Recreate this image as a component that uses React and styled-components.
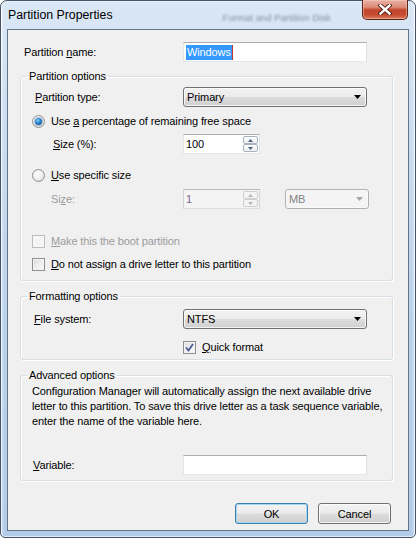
import React from "react";
import styled, { createGlobalStyle } from "styled-components";

const GlobalStyle = createGlobalStyle`
  html, body { margin: 0; padding: 0; background: #ffffff; }
  body { font-family: "Liberation Sans", Arial, sans-serif; }
  *, *::before, *::after { box-sizing: border-box; }
`;

/* ---------- window frame ---------- */

const Window = styled.div`
  width: 416px;
  height: 538px;
  display: flex;
  flex-direction: column;
  padding: 0 6px 6px;
  border: 1px solid #46546a;
  border-radius: 7px 7px 5px 5px;
  background:
    linear-gradient(90deg, rgba(255,255,255,0.55) 0, rgba(255,255,255,0) 3px, rgba(255,255,255,0) calc(100% - 3px), rgba(255,255,255,0.5) 100%),
    linear-gradient(180deg, #dae7f5 0%, #c8dbef 28%, #bbd2eb 60%, #b3cce8 100%);
  box-shadow: inset 0 0 0 1px rgba(255,255,255,0.55);
`;

const TitleBar = styled.div`
  height: 28px;
  display: flex;
  align-items: flex-start;
`;

const Title = styled.div`
  margin: 7px 0 0 1px;
  font-size: 12.3px;
  line-height: 14px;
  color: #000;
  white-space: nowrap;
`;

const GhostTitle = styled.div`
  margin: 11px 0 0 110px;
  font-size: 9.6px;
  line-height: 12px;
  color: rgba(45, 55, 75, 0.5);
  filter: blur(0.9px);
  white-space: nowrap;
`;

const CloseButton = styled.div`
  margin: -1px 1px 0 auto;
  width: 46px;
  height: 20px;
  display: flex;
  align-items: center;
  justify-content: center;
  border: 1px solid #5e2318;
  border-top: none;
  border-radius: 0 0 5px 5px;
  background: linear-gradient(180deg, #e9b0a3 0%, #dc8b78 38%, #c4452d 52%, #c54c33 78%, #dc7d5f 100%);
  box-shadow: inset 0 0 0 1px rgba(255, 215, 200, 0.45);
`;

const Client = styled.div`
  flex: 1;
  display: flex;
  flex-direction: column;
  padding-top: 12px;
  background: #f0f0f0;
  border: 1px solid #637589;
  font-size: 11px;
  letter-spacing: -0.12px;
  color: #000;
`;

/* ---------- rows and labels ---------- */

const Row = styled.div`
  display: flex;
  align-items: center;
  height: ${(p) => p.$h || 20}px;
  margin-top: ${(p) => p.$top || 0}px;
  padding-left: ${(p) => p.$pad || 0}px;
  white-space: nowrap;
`;

const Label = styled.div`
  width: ${(p) => p.$w || 162}px;
  padding-left: ${(p) => p.$pad || 0}px;
  flex: none;
  color: ${(p) => (p.$disabled ? "#9c9c9c" : "#000")};
`;

const Key = styled.span`
  text-decoration: underline;
  text-underline-offset: 1px;
`;

const Choice = styled.span`
  margin-left: 6px;
  color: ${(p) => (p.$disabled ? "#9c9c9c" : "#000")};
`;

/* ---------- group boxes ---------- */

const Group = styled.fieldset`
  margin: ${(p) => p.$top}px 15px 0 12px;
  padding: 0 0 ${(p) => p.$bottom}px 0;
  min-inline-size: 0;
  border: 1px solid #d5dfe5;
  border-radius: 3px;
  box-shadow: inset 1px 1px 0 #ffffff, 1px 1px 0 #ffffff;
`;

const Legend = styled.legend`
  margin-left: 6px;
  padding: 0 2px;
  font-size: 11px;
  line-height: 14px;
  color: #000;
`;

const Paragraph = styled.p`
  margin: 2px 0 0;
  padding-left: 11px;
  line-height: 15px;
  white-space: nowrap;
`;

/* ---------- controls ---------- */

const TextBox = styled.div`
  width: ${(p) => p.$w || 184}px;
  height: 20px;
  flex: none;
  display: flex;
  align-items: center;
  padding: 0 2px;
  background: #ffffff;
  border: 1px solid;
  border-color: #abadb3 #dbdfe6 #e3e9ef #e2e3ea;
`;

const Selected = styled.span`
  background: #3399ff;
  color: #ffffff;
  line-height: 15px;
  padding: 0 1px 0 1px;
  border-right: 1px solid #c8382a;
`;

const Combo = styled.div`
  width: ${(p) => p.$w || 184}px;
  height: 20px;
  flex: none;
  display: flex;
  align-items: center;
  justify-content: space-between;
  margin-left: ${(p) => p.$gap || 0}px;
  padding: 0 5px 0 3px;
  border: 1px solid ${(p) => (p.$disabled ? "#adb2b5" : "#707070")};
  border-radius: 3px;
  color: ${(p) => (p.$disabled ? "#838383" : "#000")};
  background: ${(p) =>
    p.$disabled
      ? "#f4f4f4"
      : "linear-gradient(180deg, #f2f2f2 0%, #ebebeb 48%, #dddddd 52%, #cfcfcf 100%)"};
  box-shadow: inset 0 0 0 1px ${(p) => (p.$disabled ? "#f9f9f9" : "rgba(255,255,255,0.75)")};
`;

const SpinBox = styled.div`
  width: 77px;
  height: 20px;
  flex: none;
  display: flex;
  padding: 0 1px 0 0;
  border: 1px solid;
  border-color: ${(p) => (p.$disabled ? "#b9b9b9 #d4d4d4 #dcdcdc #d4d4d4" : "#abadb3 #dbdfe6 #e3e9ef #e2e3ea")};
  background: ${(p) => (p.$disabled ? "#f4f4f4" : "#ffffff")};
`;

const SpinValue = styled.span`
  flex: 1;
  padding-left: 2px;
  line-height: 18px;
  color: ${(p) => (p.$disabled ? "#7b678e" : "#000")};
`;

const SpinButtons = styled.div`
  width: 15px;
  display: flex;
  flex-direction: column;
  padding: 1px 0;
`;

const SpinButton = styled.div`
  flex: 1;
  display: flex;
  align-items: center;
  justify-content: center;
  border: 1px solid ${(p) => (p.$disabled ? "#cfcfcf" : "#a9b3bf")};
  border-radius: 2px;
  background: ${(p) =>
    p.$disabled ? "#f4f4f4" : "linear-gradient(180deg, #fdfdfd 0%, #ececec 100%)"};
`;

const Radio = styled.span`
  width: 13px;
  height: 13px;
  flex: none;
  border-radius: 50%;
  border: 1px solid #8e8f8f;
  display: flex;
  align-items: center;
  justify-content: center;
  background: radial-gradient(circle at 40% 35%, #ffffff 0%, #f1f1f1 45%, #d5d5d5 100%);
  &::after {
    content: "";
    width: 7px;
    height: 7px;
    border-radius: 50%;
    display: ${(p) => (p.$checked ? "block" : "none")};
    background: radial-gradient(circle at 40% 35%, #8fd4fb 0%, #2b86d2 40%, #0d3d73 100%);
    box-shadow: 0 0 0 1px rgba(35, 90, 150, 0.35);
  }
`;

const Check = styled.span`
  width: 13px;
  height: 13px;
  flex: none;
  display: flex;
  align-items: center;
  justify-content: center;
  border: 1px solid ${(p) => (p.$disabled ? "#bcbcbc" : "#8e8f8f")};
  background: ${(p) =>
    p.$disabled
      ? "#f4f4f4"
      : "linear-gradient(135deg, #d9d9d9 0%, #ededed 50%, #fbfbfb 100%)"};
  box-shadow: inset 0 0 0 1px ${(p) => (p.$disabled ? "#f7f7f7" : "#f4f4f4")};
`;

const ButtonBar = styled.div`
  display: flex;
  justify-content: flex-end;
  gap: 10px;
  margin-top: 22px;
  padding-right: 17px;
`;

const Button = styled.div`
  width: 73px;
  height: 21px;
  display: flex;
  align-items: center;
  justify-content: center;
  border: 1px solid ${(p) => (p.$default ? "#3c7fb1" : "#707070")};
  border-radius: 3px;
  background: linear-gradient(180deg, #f2f2f2 0%, #ebebeb 48%, #dddddd 52%, #cfcfcf 100%);
  box-shadow: inset 0 0 0 1px ${(p) => (p.$default ? "#a6d6f2" : "rgba(255,255,255,0.8)")};
  color: #000;
`;

/* ---------- small drawings ---------- */

const DropArrow = ({ color = "#000" }) => (
  <svg width="7" height="4" viewBox="0 0 7 4">
    <polygon points="0,0 7,0 3.5,4" fill={color} />
  </svg>
);

const SpinArrow = ({ up, color }) => (
  <svg width="5" height="3" viewBox="0 0 5 3">
    <polygon points={up ? "0,3 5,3 2.5,0" : "0,0 5,0 2.5,3"} fill={color} />
  </svg>
);

const CloseGlyph = () => (
  <svg width="14" height="11" viewBox="0 0 14 11">
    <path d="M2.5 1.5 L11.5 9.5 M11.5 1.5 L2.5 9.5" stroke="#4a1710" strokeWidth="4.2" strokeLinecap="square" />
    <path d="M2.5 1.5 L11.5 9.5 M11.5 1.5 L2.5 9.5" stroke="#ffffff" strokeWidth="2.4" strokeLinecap="square" />
  </svg>
);

const CheckMark = () => (
  <svg width="9" height="9" viewBox="0 0 9 9">
    <path d="M1 4.5 L3.5 7.5 L8 1" fill="none" stroke="#4a5d99" strokeWidth="1.8" />
  </svg>
);

const Spinner = ({ value, disabled }) => {
  const tint = disabled ? "#b5b5b5" : "#4c607f";
  return (
    <SpinBox $disabled={disabled}>
      <SpinValue $disabled={disabled}>{value}</SpinValue>
      <SpinButtons>
        <SpinButton $disabled={disabled}>
          <SpinArrow up color={tint} />
        </SpinButton>
        <SpinButton $disabled={disabled}>
          <SpinArrow color={tint} />
        </SpinButton>
      </SpinButtons>
    </SpinBox>
  );
};

export default function App() {
  return (
    <>
      <GlobalStyle />
      <Window>
        <TitleBar>
          <Title>Partition Properties</Title>
          <GhostTitle>Format and Partition Disk</GhostTitle>
          <CloseButton>
            <CloseGlyph />
          </CloseButton>
        </TitleBar>

        <Client>
          <Row>
            <Label $w={175} $pad={16}>
              Partition <Key>n</Key>ame:
            </Label>
            <TextBox>
              <Selected>Windows</Selected>
            </TextBox>
          </Row>

          <Group $top={7} $bottom={9}>
            <Legend>Partition options</Legend>
            <Row $top={4}>
              <Label $pad={14}>
                <Key>P</Key>artition type:
              </Label>
              <Combo>
                <span>Primary</span>
                <DropArrow />
              </Combo>
            </Row>
            <Row $top={7} $h={14} $pad={11}>
              <Radio $checked />
              <Choice>
                Use <Key>a</Key> percentage of remaining free space
              </Choice>
            </Row>
            <Row $top={6}>
              <Label $pad={32}>
                <Key>S</Key>ize (%):
              </Label>
              <Spinner value="100" />
            </Row>
            <Row $top={14} $h={14} $pad={11}>
              <Radio />
              <Choice>
                <Key>U</Key>se specific size
              </Choice>
            </Row>
            <Row $top={7}>
              <Label $pad={30} $disabled>
                Si<Key>z</Key>e:
              </Label>
              <Spinner value="1" disabled />
              <Combo $w={84} $gap={25} $disabled>
                <span>MB</span>
                <DropArrow color="#a5a5a5" />
              </Combo>
            </Row>
            <Row $top={25} $h={14} $pad={11}>
              <Check $disabled />
              <Choice $disabled>
                <Key>M</Key>ake this the boot partition
              </Choice>
            </Row>
            <Row $top={9} $h={14} $pad={11}>
              <Check />
              <Choice>
                <Key>D</Key>o not assign a drive letter to this partition
              </Choice>
            </Row>
          </Group>

          <Group $top={8} $bottom={5}>
            <Legend>Formatting options</Legend>
            <Row $top={6}>
              <Label $pad={13}>
                <Key>F</Key>ile system:
              </Label>
              <Combo>
                <span>NTFS</span>
                <DropArrow />
              </Combo>
            </Row>
            <Row $top={11} $h={14} $pad={162}>
              <Check>
                <CheckMark />
              </Check>
              <Choice>
                <Key>Q</Key>uick format
              </Choice>
            </Row>
          </Group>

          <Group $top={8} $bottom={5}>
            <Legend>Advanced options</Legend>
            <Paragraph>
              Configuration Manager will automatically assign the next available drive
              <br />
              letter to this partition. To save this drive letter as a task sequence variable,
              <br />
              enter the name of the variable here.
            </Paragraph>
            <Row $top={26}>
              <Label $pad={12}>
                <Key>V</Key>ariable:
              </Label>
              <TextBox />
            </Row>
          </Group>

          <ButtonBar>
            <Button $default>OK</Button>
            <Button>Cancel</Button>
          </ButtonBar>
        </Client>
      </Window>
    </>
  );
}
